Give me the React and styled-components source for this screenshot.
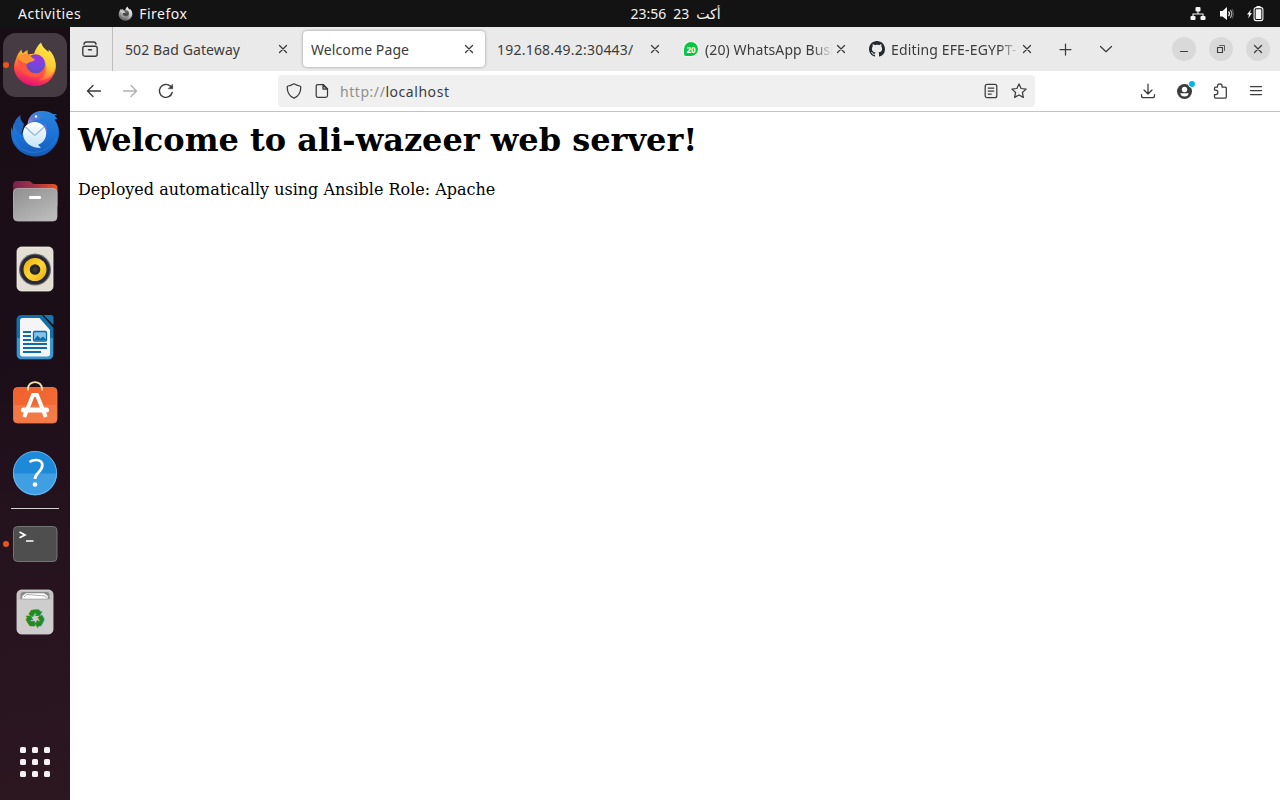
import React from "react";
import styled, { createGlobalStyle } from "styled-components";

const Global = createGlobalStyle`
  * { box-sizing: border-box; }
  html, body, #root { height: 100%; }
  body { margin: 0; overflow: hidden; background: #fff; font-family: "Noto Sans", "DejaVu Sans", sans-serif; }
  svg { display: block; flex: none; }
`;

const Desktop = styled.div`
  width: 1280px;
  height: 800px;
  display: flex;
  flex-direction: column;
  overflow: hidden;
`;

const TopBar = styled.header`
  height: 27px;
  flex: none;
  display: grid;
  grid-template-columns: 1fr auto 1fr;
  align-items: center;
  background: #131313;
  color: #f2f2f2;
  font-size: 14px;
`;

const TopLeft = styled.div`
  display: flex;
  align-items: center;
  padding-left: 18px;
`;

const Text = styled.span`
  white-space: nowrap;
  letter-spacing: ${(p) => p.$track || 0}px;
`;

const AppMenu = styled.div`
  display: flex;
  align-items: center;
  gap: 6px;
  margin-left: 37px;
`;

const Clock = styled.div`
  display: flex;
  direction: ltr;
  align-items: center;
  gap: 7px;
  padding-left: 71px;
`;

const Month = styled.span`
  font-family: "DejaVu Sans", sans-serif;
  font-size: 14px;
  line-height: 18px;
`;

const Status = styled.div`
  display: flex;
  justify-content: flex-end;
  gap: 12px;
  padding-right: 16px;
`;

const Main = styled.div`
  flex: 1;
  display: flex;
  min-height: 0;
`;

const Dock = styled.nav`
  width: 70px;
  flex: none;
  display: flex;
  flex-direction: column;
  padding: 4px 0;
  background: linear-gradient(168deg, #190d15 0%, #1b0e18 42%, #24121d 62%, #2c1721 100%);
`;

const DockCell = styled.div`
  position: relative;
  height: 68px;
  display: flex;
  align-items: center;
  justify-content: center;
  margin-top: ${(p) => (p.$last ? "auto" : 0)};
`;

const DockTile = styled.div`
  width: 64px;
  height: 64px;
  display: flex;
  align-items: center;
  justify-content: center;
  border-radius: 13px;
  background: ${(p) => (p.$active ? "#463b43" : "transparent")};
`;

const RunningDot = styled.i`
  position: absolute;
  left: 3px;
  top: 31px;
  width: 6px;
  height: 6px;
  border-radius: 50%;
  background: #e95420;
`;

const DockRule = styled.div`
  height: 1px;
  margin: 1px 11px;
  background: #d5d1d3;
`;

const Window = styled.section`
  flex: 1;
  min-width: 0;
  display: flex;
  flex-direction: column;
  background: #fff;
  color: #3c3c3c;
`;

const TabStrip = styled.div`
  height: 44px;
  flex: none;
  display: flex;
  align-items: center;
  background: #eaeaea;
`;

const RecentButton = styled.div`
  width: 43px;
  height: 44px;
  flex: none;
  display: flex;
  align-items: center;
  justify-content: center;
  padding-right: 2px;
  border-right: 1px solid #bdbdbd;
`;

const Tabs = styled.div`
  display: flex;
  padding-left: 2px;
`;

const Tab = styled.div`
  width: 182px;
  height: 36px;
  margin: 0 2px;
  padding: 0 8px;
  display: flex;
  align-items: center;
  gap: 6px;
  border-radius: 4px;
  font-size: 14px;
  background: ${(p) => (p.$active ? "#fff" : "transparent")};
  box-shadow: ${(p) => (p.$active ? "0 0 3px rgba(0,0,0,.4)" : "none")};
`;

const TabTitle = styled.div`
  flex: 1;
  min-width: 0;
  white-space: nowrap;
  letter-spacing: ${(p) => p.$track || 0}px;
  mask-image: ${(p) => (p.$fade ? "linear-gradient(to left, transparent 0, #000 20px)" : "none")};
  margin-right: -6px;
`;

const StripButtons = styled.div`
  display: flex;
  align-items: center;
  gap: 26px;
  margin-left: 12px;
`;

const WindowButtons = styled.div`
  display: flex;
  gap: 13px;
  margin-left: auto;
  padding-right: 10px;
`;

const RoundButton = styled.div`
  width: 24px;
  height: 24px;
  display: flex;
  align-items: center;
  justify-content: center;
  border-radius: 50%;
  background: #d9d9d9;
`;

const Toolbar = styled.div`
  height: 41px;
  flex: none;
  display: flex;
  align-items: center;
  border-bottom: 1px solid #c3c3c3;
`;

const NavButtons = styled.div`
  width: 208px;
  display: flex;
  gap: 20px;
  padding-left: 16px;
`;

const AddressBar = styled.div`
  width: 757px;
  height: 32px;
  display: flex;
  align-items: center;
  padding: 0 8px;
  border-radius: 4px;
  background: #f0f0f0;
  font-size: 14px;
`;

const Address = styled.div`
  flex: 1;
  margin-left: 10px;
  letter-spacing: ${(p) => p.$track}px;
`;

const Scheme = styled.span`
  color: #8f8f8f;
`;

const IconGroup = styled.div`
  display: flex;
  gap: ${(p) => p.$gap}px;
`;

const ToolButtons = styled.div`
  display: flex;
  gap: 20px;
  margin-left: auto;
  padding-right: 16px;
`;

const Page = styled.main`
  flex: 1;
  padding: 8px;
  overflow: hidden;
  color: #000;
  font-family: "DejaVu Serif", serif;
`;

const Heading = styled.h1`
  margin: 1px 0 21px;
  font-size: 32px;
  line-height: 38px;
  font-weight: 700;
`;

const Paragraph = styled.p`
  margin: 0;
  font-size: 16px;
  line-height: 19px;
`;

const Line = ({ size = 16, color = "#3c3c3c", w = 1.25, children }) => (
  <svg width={size} height={size} viewBox={`0 0 ${size} ${size}`} fill="none" stroke={color} strokeWidth={w} strokeLinecap="round" strokeLinejoin="round">
    {children}
  </svg>
);

const Close = ({ inset = 4.5 }) => (
  <Line w={1.3}>
    <path d={`M${inset} ${inset}L${16 - inset} ${16 - inset}M${16 - inset} ${inset}L${inset} ${16 - inset}`} />
  </Line>
);

const FirefoxShape = ({ mono }) => {
  const id = mono ? "m" : "c";
  const stops = mono
    ? ["#f2f2f2", "#b5b5b5", "#858585", "#686868"]
    : ["#ffd93f", "#ff9528", "#ff4a48", "#e30f76"];
  return (
    <>
      <defs>
        <linearGradient id={`ff-${id}`} x1=".72" y1=".05" x2=".4" y2="1">
          <stop offset="0" stopColor={stops[0]} />
          <stop offset=".34" stopColor={stops[1]} />
          <stop offset=".66" stopColor={stops[2]} />
          <stop offset="1" stopColor={stops[3]} />
        </linearGradient>
        <linearGradient id={`flame-${id}`} x1=".7" y1="0" x2=".3" y2="1">
          <stop offset="0" stopColor={mono ? "#fff" : "#fff04c"} />
          <stop offset=".55" stopColor={mono ? "#ccc" : "#ffc934"} />
          <stop offset="1" stopColor={mono ? "#999" : "#ff5340"} />
        </linearGradient>
        <radialGradient id={`globe-${id}`} cx=".6" cy=".2" r=".85">
          <stop offset="0" stopColor={mono ? "#707070" : "#9b32dc"} />
          <stop offset=".5" stopColor={mono ? "#444" : "#7446e0"} />
          <stop offset="1" stopColor={mono ? "#666" : "#5d50b8"} />
        </radialGradient>
      </defs>
      <path d="M5 18C6 14 8 11 10.500 8.500c0 2 .8 3 1.500 3.800 2-1.800 4-2.800 4.800-3.200-.5 1.800-.2 3.600.4 4.400C21 12 25 13 28 14L38 12C43 16 45 21 45 26 44 37 35 45 24 45S3 36 3 26c0-3 1-6 2-8z" fill={`url(#ff-${id})`} />
      <path d="M30 1.500c1 4 4 6.500 7.500 9.500.2-1 .2-1.500 0-2.500 4 3.500 6.500 8 7 14C45 33 37 40 27 39.500c6-3 10-9.500 8-16.500-1.500-6-5-8-12-10C24 9 26.500 4.500 30 1.500z" fill={`url(#flame-${id})`} />
      <circle cx="24.500" cy="23" r="9.700" fill={`url(#globe-${id})`} />
      <path d="M6.500 17c5-5 11-4.500 14.500-.5 1 1.200 1.800 1.500 3 1.600-.5 1.700-2 2.500-5 2.900-1.500.3-2 1.500-3.500 1.700-.7 5 3.500 9.500 9.500 9.500 4 0 7-2 9-5-1 6-6 9-11 8.800C13 35.500 6.500 27 6.500 17z" fill={mono ? "#9b9b9b" : "#ff5540"} />
      <path d="M6.500 17c5-5 11-4.500 14.500-.5 1 1.200 1.800 1.500 3 1.600-.5 1.700-2 2.500-5 2.900-1.500.3-2 1.500-3.500 1.700-4-1-7-3-9-5.700z" fill={mono ? "#c9c9c9" : "#ff9430"} />
    </>
  );
};

const FirefoxIcon = ({ size = 48, mono }) => (
  <svg width={size} height={size} viewBox={mono ? "2 0 44 46" : "0 0 48 48"}>
    <FirefoxShape mono={mono} />
  </svg>
);

const ThunderbirdIcon = () => (
  <svg width="48" height="48" viewBox="0 0 48 48">
    <defs>
      <linearGradient id="tb" x1=".5" y1="0" x2=".5" y2="1">
        <stop offset="0" stopColor="#2b83dc" />
        <stop offset=".55" stopColor="#1a72d6" />
        <stop offset="1" stopColor="#1659b8" />
      </linearGradient>
      <linearGradient id="tbEnv" x1="0" y1="0" x2="0" y2="1">
        <stop offset="0" stopColor="#fff" />
        <stop offset="1" stopColor="#c5e2fb" />
      </linearGradient>
      <linearGradient id="tbHead" x1="0" y1="1" x2=".7" y2="0">
        <stop offset="0" stopColor="#9b90e0" />
        <stop offset=".45" stopColor="#6279d4" />
        <stop offset="1" stopColor="#2b83dc" />
      </linearGradient>
    </defs>
    <path d="M9.500 6c-1 3 .8 6 3.500 9L9 30 1.500 26C1 18 4 9 9.500 6z" fill="#1f69c2" />
    <path d="M0 18l2 5c-.5-3 0-6 1-9 0 5 3 9 7 12l7-11C18 7 23 2 31 2c4-.2 8 .8 11 3l4 .3-2.500 1.500L46.500 10l-3 .5c3 4 4.500 8 4.500 13C48 37 37 47.500 24.500 47.500S1 38 .2 26C0 23 0 21 0 18z" fill="url(#tb)" />
    <path d="M16.500 15.500C17 7 23 2 31 2c-1.500 1-2 3-1 5 1 3-2 3.500-5 4.300-3 .8-6 1.700-8.500 4.200z" fill="url(#tbHead)" />
    <path d="M33 14c4 4 4 11-.5 15.500 1.500-4 2-8 .5-15.500z" fill="#736fd2" />
    <circle cx="25" cy="7.500" r="1.200" fill="#fff" />
    <path d="M35.200 24.500c0 5-3 9.500-8.200 11.200l3 3.300C20 39 12 33 12 24.500 12 18 17 13 23.600 13s11.600 5 11.600 11.500z" fill="url(#tbEnv)" />
    <path d="M14.500 18l8 7.500c.9.800 1.700.8 2.600 0L33 18" fill="none" stroke="#8fbbe5" strokeWidth="1.200" />
    <path d="M3 29c3 10 13 16 24 14 8-1.500 14-6 18-13" fill="none" stroke="#3289e5" strokeWidth="1.500" opacity=".4" />
  </svg>
);

const FilesIcon = () => (
  <svg width="48" height="48" viewBox="0 0 48 48">
    <defs>
      <linearGradient id="fBack"><stop stopColor="#77214f" /><stop offset=".5" stopColor="#a83448" /><stop offset="1" stopColor="#ec5426" /></linearGradient>
      <linearGradient id="fFront" x1="0" y1="0" x2=".7" y2="1"><stop stopColor="#8f8f8f" /><stop offset="1" stopColor="#bababa" /></linearGradient>
    </defs>
    <path d="M2 30V8c0-2.500 1.500-4 4-4h12c2 0 3 3 5 3h19c3 0 4.500 1.500 4.500 4v18z" fill="url(#fBack)" />
    <rect x="2.500" y="11.500" width="43.500" height="32.500" rx="4" fill="url(#fFront)" stroke="#b9b9b9" strokeWidth=".8" />
    <rect x="18" y="19" width="12" height="3" rx="1.300" fill="#fff" />
  </svg>
);

const MusicIcon = () => (
  <svg width="48" height="48" viewBox="0 0 48 48">
    <defs><linearGradient id="cone" x1="0" y1="0" x2="1" y2="1"><stop stopColor="#e6a90d" /><stop offset=".5" stopColor="#ffd633" /><stop offset="1" stopColor="#e8ad10" /></linearGradient></defs>
    <rect x="6" y="2" width="36" height="44" rx="4.500" fill="#e3dfd4" stroke="#f1eee6" strokeWidth=".8" />
    <circle cx="24" cy="24.500" r="16" fill="#6a6a6c" />
    <circle cx="24" cy="24.500" r="14.800" fill="#272737" />
    <circle cx="24" cy="24.500" r="11.500" fill="url(#cone)" />
    <circle cx="24" cy="24.500" r="5.300" fill="#272727" />
    <circle cx="24" cy="24.500" r="2.200" fill="#3b3b3b" />
  </svg>
);

const WriterIcon = () => (
  <svg width="48" height="48" viewBox="0 0 48 48">
    <path d="M11 2h20l11.500 13v26c0 3.500-2 5.500-5.500 5.500H11c-3.500 0-5.500-2-5.500-5.500V7C5.500 4 7.500 2 11 2z" fill="#0f70aa" />
    <path d="M6 25h36v16c0 3.500-1.500 5-5 5H11c-3.500 0-5-1.500-5-5z" fill="#3997cd" />
    <path d="M11.500 5h17L39 17v24c0 1.500-1 2.500-2.500 2.500h-25c-1.500 0-2.500-1-2.500-2.500V7.500C9 6 10 5 11.500 5z" fill="#f5f5f5" />
    <path d="M32.500 2H40c1.500 0 2.500 1 2.500 2.500V12z" fill="#1a77ab" />
    <path d="M12 19h8M12 23h8M12 27h8M12 31h24M12 35h24M12 39h18" stroke="#0e6da6" strokeWidth="1.900" />
    <rect x="22.500" y="18.500" width="13" height="9.500" rx="1" fill="#83c3e8" stroke="#0e6da6" strokeWidth="1.300" />
    <path d="M23 27l3.500-4.500 3 3 2.500-2 3.500 3.500z" fill="#0e6da6" />
  </svg>
);

const SoftwareIcon = () => (
  <svg width="48" height="48" viewBox="0 0 48 48">
    <defs><linearGradient id="bag" x1="0" y1="0" x2="1" y2="1"><stop stopColor="#f1602b" /><stop offset="1" stopColor="#f07039" /></linearGradient></defs>
    <rect x="2.500" y="6.500" width="43.500" height="35.500" rx="4" fill="url(#bag)" stroke="#ed7f50" strokeWidth=".8" />
    <path d="M3 24h42.500v14q0 3.500-3.500 3.500H6.500Q3 41.500 3 38z" fill="#f58252" opacity=".65" />
    <path d="M17 9.500V8c0-9.300 14-9.300 14 0v1.500" fill="none" stroke="#f5dfaa" strokeWidth="1.800" />
    <path d="M13.200 36L22 14h4L34.800 36" fill="none" stroke="#fff" strokeWidth="3.900" />
    <rect x="10" y="26.500" width="28" height="5" rx="2.500" fill="#fff" />
  </svg>
);

const HelpIcon = () => (
  <svg width="48" height="48" viewBox="0 0 48 48">
    <circle cx="24" cy="24" r="22" fill="#1e88d9" />
    <path d="M2 24.500a22 22 0 0 0 44 0z" fill="#3f9fe2" />
    <circle cx="24" cy="24" r="21.600" fill="none" stroke="#79bdea" strokeWidth=".8" />
    <path d="M18.500 13c2-1.500 4-2 6.500-2 4 0 6.300 2 6.300 5.500 0 6.500-7.300 7-7.300 13.500" fill="none" stroke="#fff" strokeWidth="2.700" />
    <circle cx="24" cy="35.500" r="2.300" fill="#fff" />
  </svg>
);

const TerminalIcon = () => (
  <svg width="48" height="48" viewBox="0 0 48 48">
    <rect x="2.500" y="6.500" width="43.500" height="35" rx="4" fill="#4e4e4e" stroke="#757575" />
    <path d="M8.500 12l5.500 2.900-5.500 2.900" fill="none" stroke="#fff" strokeWidth="1.700" />
    <path d="M15 21h7.500" stroke="#fff" strokeWidth="1.500" />
  </svg>
);

const TrashIcon = () => (
  <svg width="48" height="48" viewBox="0 0 48 48">
    <rect x="6" y="2" width="36" height="44" rx="4.500" fill="#c2c2c2" stroke="#dedede" strokeWidth=".8" />
    <path d="M6.500 12h35v30q0 3.500-3.500 3.500H10q-3.500 0-3.500-3.500z" fill="#cdcdcd" />
    <path d="M9.500 11V7q0-3 3-3h23q3 0 3 3v4z" fill="#888" />
    <path d="M11 11V8l4-3h18l4 3v3z" fill="#fff" stroke="#999" strokeWidth=".6" />
    <path d="M13 9L16 6.500 34 8l2 2.500" fill="none" stroke="#999" strokeWidth=".8" />
    <text x="24" y="38.500" textAnchor="middle" fill="#218a20" stroke="#218a20" strokeWidth=".9" fontSize="24" fontFamily="DejaVu Sans">♻</text>
  </svg>
);

const GridIcon = () => (
  <svg width="48" height="48" viewBox="0 0 48 48" fill="#f4f1f2">
    {[9, 21, 33].map((y) => [9, 21, 33].map((x) => <rect key={`${x}-${y}`} x={x} y={y} width="6" height="6" rx="1.500" />))}
  </svg>
);

const GithubIcon = () => (
  <svg width="16" height="16" viewBox="0 0 16 16" fill="#24292f">
    <path d="M8 0C3.580 0 0 3.580 0 8c0 3.540 2.290 6.530 5.470 7.590.4.070.55-.17.55-.38 0-.19-.01-.82-.01-1.490-2.010.37-2.530-.49-2.690-.94-.09-.23-.48-.94-.82-1.130-.28-.15-.68-.52-.01-.53.63-.01 1.080.58 1.230.82.72 1.210 1.870.87 2.330.66.07-.52.28-.87.51-1.070-1.780-.2-3.640-.89-3.640-3.950 0-.87.31-1.590.82-2.150-.08-.2-.36-1.020.08-2.120 0 0 .67-.21 2.200.82.64-.18 1.320-.27 2-.27s1.360.09 2 .27c1.530-1.040 2.200-.82 2.200-.82.44 1.100.16 1.920.08 2.120.51.56.82 1.270.82 2.150 0 3.070-1.870 3.750-3.650 3.950.29.25.54.73.54 1.480 0 1.070-.01 1.930-.01 2.200 0 .21.15.46.55.38A8.010 8.010 0 0 0 16 8c0-4.420-3.580-8-8-8z" />
  </svg>
);

const Badge = styled.div`
  width: 14px;
  height: 14px;
  margin: 0 1px;
  flex: none;
  display: flex;
  align-items: center;
  justify-content: center;
  border-radius: 50% 50% 50% 15%;
  background: #0ac53f;
  box-shadow: 0 0 0 1px #f8f8f8;
  color: #fff;
  font: 700 8px "Noto Sans", sans-serif;
`;

const dockApps = [
  { name: "firefox", Icon: FirefoxIcon, active: true, running: true },
  { name: "mail", Icon: ThunderbirdIcon },
  { name: "files", Icon: FilesIcon },
  { name: "music", Icon: MusicIcon },
  { name: "writer", Icon: WriterIcon },
  { name: "software", Icon: SoftwareIcon },
  { name: "help", Icon: HelpIcon },
];

const tabs = [
  { title: "502 Bad Gateway", track: 0.1 },
  { title: "Welcome Page", track: 0.1, active: true },
  { title: "192.168.49.2:30443/", track: 0.22 },
  { title: "(20) WhatsApp Busi", track: 0.1, icon: <Badge>20</Badge>, fade: true },
  { title: "Editing EFE-EGYPT-S", track: 0.15, icon: <GithubIcon />, fade: true },
];

const DockItem = ({ Icon, active, running, last }) => (
  <DockCell $last={last}>
    <DockTile $active={active}><Icon /></DockTile>
    {running && <RunningDot />}
  </DockCell>
);

export default function App() {
  return (
    <Desktop>
      <Global />
      <TopBar>
        <TopLeft>
          <Text $track={0.48}>Activities</Text>
          <AppMenu>
            <FirefoxIcon size={15} mono />
            <Text $track={0.5}>Firefox</Text>
          </AppMenu>
        </TopLeft>
        <Clock>
          <Text>23:56</Text>
          <Text>23</Text>
          <Month>أكت</Month>
        </Clock>
        <Status>
          <svg width="16" height="16" viewBox="0 0 16 16" fill="#f5f5f5">
            <rect x="5.500" y="1" width="5" height="4.500" rx="1" />
            <rect x="0.500" y="10" width="5" height="4" rx="1" />
            <rect x="10.500" y="10" width="5" height="4" rx="1" />
            <path d="M8 5v3M3 11V8h10v3" fill="none" stroke="#f5f5f5" strokeWidth="1.100" />
          </svg>
          <svg width="16" height="16" viewBox="0 0 16 16" fill="none" stroke="#f5f5f5" strokeWidth="1.200">
            <path d="M2 5h2.500L9 1v13L4.500 10.500H2z" fill="#f5f5f5" stroke="none" />
            <path d="M10.500 5.500q2 2.200 0 4.500" />
            <path d="M12.300 3.800q3 4 0 8" stroke="#aaa" />
            <path d="M14.100 3q2.500 4.800 0 9.500" stroke="#555" />
          </svg>
          <svg width="18" height="16" viewBox="0 0 18 16" fill="#f5f5f5">
            <path d="M5 3.500L1 8.500h2l-.8 4L6 7H4z" />
            <rect x="8.100" y="1.600" width="8.800" height="13" rx="2" fill="none" stroke="#f5f5f5" strokeWidth="1.100" />
            <rect x="9.700" y="3.200" width="5.600" height="9.800" rx=".5" />
            <rect x="10.500" y="0" width="4" height="1.500" />
          </svg>
        </Status>
      </TopBar>
      <Main>
        <Dock>
          {dockApps.map(({ name, ...app }) => <DockItem key={name} {...app} />)}
          <DockRule />
          <DockItem Icon={TerminalIcon} running />
          <DockItem Icon={TrashIcon} />
          <DockItem Icon={GridIcon} last />
        </Dock>
        <Window>
          <TabStrip>
            <RecentButton>
              <Line w={1.400}>
                <path d="M2 3.200Q2.200 1 4.500 1h7Q13.800 1 14 3.200" />
                <rect x=".8" y="5.200" width="14.400" height="10" rx="2" />
                <path d="M6.500 8.700h3" />
              </Line>
            </RecentButton>
            <Tabs>
              {tabs.map((t) => (
                <Tab key={t.title} $active={t.active}>
                  {t.icon}
                  <TabTitle $track={t.track} $fade={t.fade}>{t.title}</TabTitle>
                  <Close />
                </Tab>
              ))}
            </Tabs>
            <StripButtons>
              <Line><path d="M8.500 3v11M3 8.500h11" /></Line>
              <Line size={14}><path d="M1.500 4.500L7 9.700l5.500-5.200" /></Line>
            </StripButtons>
            <WindowButtons>
              <RoundButton><Line w={1.200}><path d="M4.500 10.500h7" /></Line></RoundButton>
              <RoundButton>
                <Line w={1.100}>
                  <rect x="4.500" y="6.500" width="5" height="5" />
                  <path d="M6.500 4.500h5v5" strokeWidth=".8" />
                </Line>
              </RoundButton>
              <RoundButton><Close /></RoundButton>
            </WindowButtons>
          </TabStrip>
          <Toolbar>
            <NavButtons>
              <Line w={1.400}><path d="M14.500 8h-13M7 2.500L1.500 8 7 13.500" /></Line>
              <Line w={1.400} color="#b1b1b1"><path d="M1.500 8h13M9 2.500L14.500 8 9 13.500" /></Line>
              <Line w={1.400}><path d="M14.200 9.500A6.500 6.500 0 1 1 12.300 3.100L14 4.800" /><path d="M14.700 1.500v4.300h-4.300z" fill="#3c3c3c" strokeWidth=".5" /></Line>
            </NavButtons>
            <AddressBar>
              <IconGroup $gap={12}>
                <Line><path d="M8 .8l1 .5c1.500.9 3.200 1.500 5 1.700.6.100.8.500.8 1C14.800 9.500 12 13.500 8 15.200 4 13.500 1.200 9.500 1.200 4c0-.5.200-.9.8-1 1.800-.2 3.500-.8 5-1.700z" /></Line>
                <Line><path d="M4 1.500h5l4.500 4.500v6.500q0 1.800-1.800 1.800H4q-1.800 0-1.800-1.800V3.300Q2.200 1.500 4 1.500z" /><path d="M9 1.500V6h4.500z" fill="#3c3c3c" fillOpacity=".35" /></Line>
              </IconGroup>
              <Address $track={0.55}><Scheme>http://</Scheme>localhost</Address>
              <IconGroup $gap={12}>
                <Line><rect x="2.200" y="1.300" width="11.600" height="13.400" rx="2" /><path d="M5.200 5h5.600M5.200 8h5.600M5.200 11h3" /></Line>
                <Line><path d="M8 1l2.100 4.500 5 .6-3.700 3.400 1 4.900L8 12l-4.400 2.400 1-4.900L.9 6.100l5-.6z" /></Line>
              </IconGroup>
            </AddressBar>
            <ToolButtons>
              <Line><path d="M8 1v9.500M4 7l4 4 4-4M1.500 11.500v1.200q0 2 2 2h9q2 0 2-2v-1.200" /></Line>
              <svg width="16" height="16" viewBox="0 0 16 16" overflow="visible">
                <circle cx="8.500" cy="8.500" r="7.500" fill="#3c3c3c" />
                <circle cx="8.500" cy="6.500" r="2.700" fill="#fff" />
                <path d="M4.300 10.200h8.400q-.6 3.300-4.200 3.300t-4.200-3.300z" fill="#fff" />
                <circle cx="16" cy="1" r="3.800" fill="#fff" />
                <circle cx="16" cy="1" r="3" fill="#00b3f4" />
              </svg>
              <Line><path d="M2.500 6.500V5q0-1 1-1H5.500V3c0-2.900 4.500-2.900 4.500 0v1h3.300q1 0 1 1v9q0 1-1 1H3.500q-1 0-1-1v-2.500h1.200c2.900 0 2.900-4.500 0-4.500H2.500z" /></Line>
              <Line><path d="M2.500 3.500h11M2.500 7.500h11M2.500 11.500h11" /></Line>
            </ToolButtons>
          </Toolbar>
          <Page>
            <Heading>Welcome to ali-wazeer web server!</Heading>
            <Paragraph>Deployed automatically using Ansible Role: Apache</Paragraph>
          </Page>
        </Window>
      </Main>
    </Desktop>
  );
}
